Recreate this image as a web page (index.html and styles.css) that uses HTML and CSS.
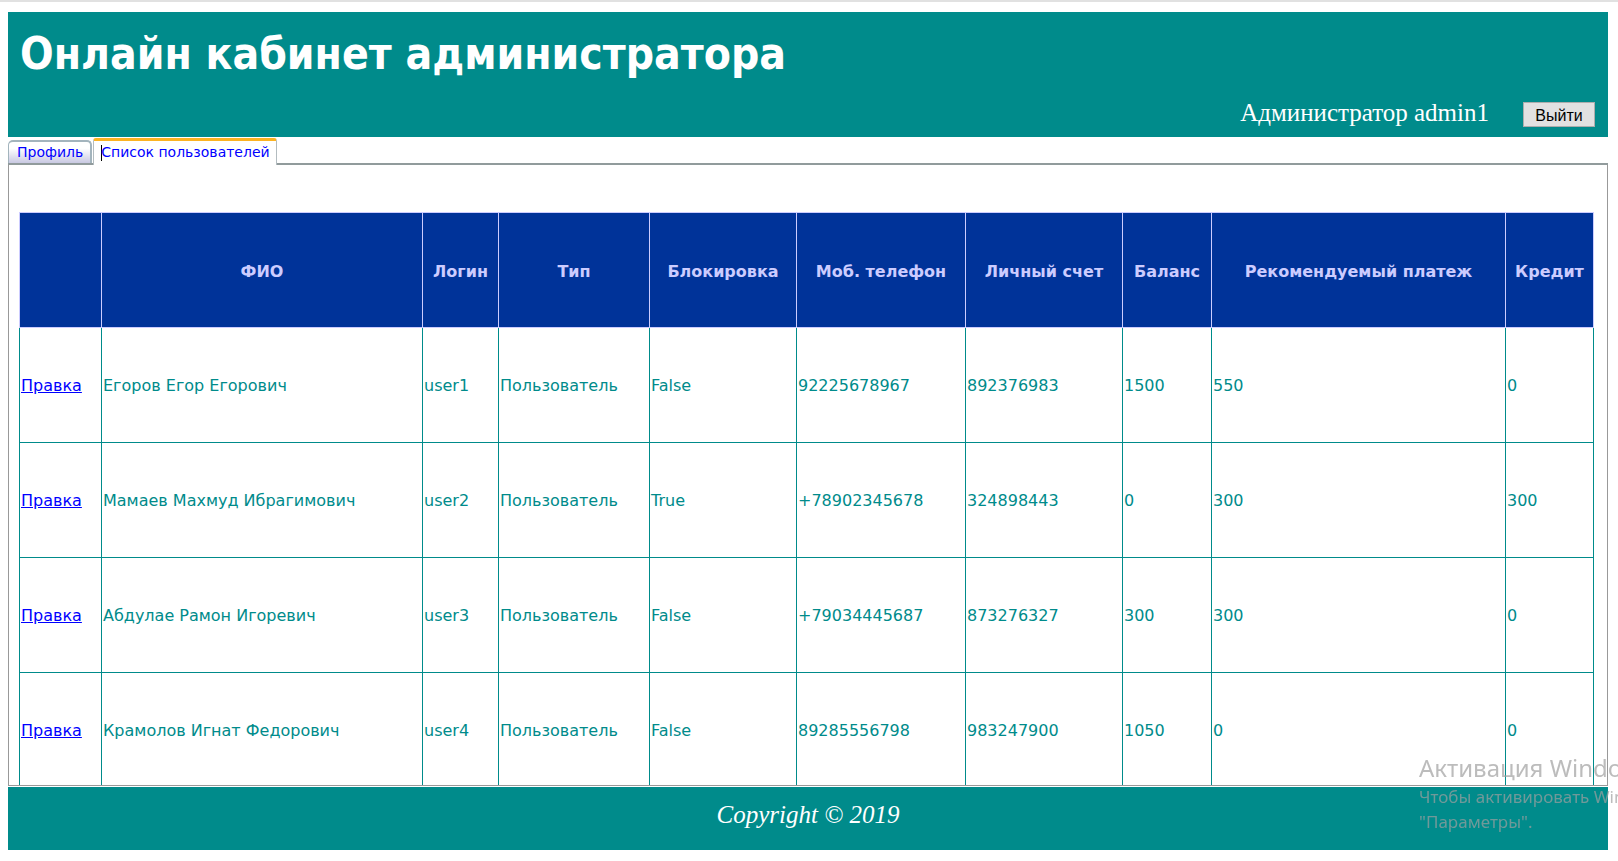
FILE: index.html
```html
<!DOCTYPE html>
<html lang="ru">
<head>
<meta charset="utf-8">
<title>Онлайн кабинет администратора</title>
<link rel="stylesheet" href="styles.css">
</head>
<body class="page">
<header class="banner">
  <h1 class="banner-title">Онлайн кабинет администратора</h1>
  <div class="account">
    <span class="account-name">Администратор admin1</span>
    <button class="logout" type="button">Выйти</button>
  </div>
</header>
<nav class="tabs">
  <a class="tab" href="#profile">Профиль</a>
  <a class="tab tab-active" href="#users"><span class="caret"></span>Список пользователей</a>
</nav>
<main class="panel" id="users">
  <table class="users">
    <colgroup>
      <col class="c-edit"><col class="c-name"><col class="c-login"><col class="c-type"><col class="c-lock">
      <col class="c-phone"><col class="c-bill"><col class="c-balance"><col class="c-payment"><col class="c-credit">
    </colgroup>
    <thead>
      <tr><th></th><th>ФИО</th><th>Логин</th><th>Тип</th><th>Блокировка</th><th>Моб. телефон</th><th>Личный счет</th><th>Баланс</th><th>Рекомендуемый платеж</th><th>Кредит</th></tr>
    </thead>
    <tbody>
      <tr><td><a href="#user1">Правка</a></td><td>Егоров Егор Егорович</td><td>user1</td><td>Пользователь</td><td>False</td><td>92225678967</td><td>892376983</td><td>1500</td><td>550</td><td>0</td></tr>
      <tr><td><a href="#user2">Правка</a></td><td>Мамаев Махмуд Ибрагимович</td><td>user2</td><td>Пользователь</td><td>True</td><td>+78902345678</td><td>324898443</td><td>0</td><td>300</td><td>300</td></tr>
      <tr><td><a href="#user3">Правка</a></td><td>Абдулае Рамон Игоревич</td><td>user3</td><td>Пользователь</td><td>False</td><td>+79034445687</td><td>873276327</td><td>300</td><td>300</td><td>0</td></tr>
      <tr><td><a href="#user4">Правка</a></td><td>Крамолов Игнат Федорович</td><td>user4</td><td>Пользователь</td><td>False</td><td>89285556798</td><td>983247900</td><td>1050</td><td>0</td><td>0</td></tr>
    </tbody>
  </table>
</main>
<footer class="footer">Copyright © 2019</footer>
<aside class="watermark">
  <div class="watermark-title">Активация Windows</div>
  <div class="watermark-text">Чтобы активировать Windows<br>"Параметры".</div>
</aside>
</body>
</html>
```
FILE: styles.css
```css
* { box-sizing: border-box; }

.page {
  display: flex;
  flex-direction: column;
  height: 100vh;
  margin: 0;
  padding: 10px 10px 11px 8px;
  border-top: 2px solid #e1e1e1;
  background: #fff;
  overflow: hidden;
  font-family: "DejaVu Sans", Verdana, sans-serif;
}

.banner {
  display: flex;
  flex-direction: column;
  justify-content: space-between;
  flex: none;
  height: 125px;
  padding: 12px 13px 10px 12px;
  background: #008b8b;
  color: #fff;
}

.banner-title {
  margin: 0;
  font: bold 44px/60px "DejaVu Sans Condensed", Tahoma, sans-serif;
}

.account {
  display: flex;
  justify-content: flex-end;
  align-items: flex-end;
  gap: 34px;
}

.account-name {
  font: 25px/28px "Liberation Serif", "Times New Roman", serif;
}

.logout {
  width: 72px;
  height: 25px;
  padding: 2px 0 0;
  border: 1px solid #adadad;
  background: #e1e1e1;
  color: #000;
  font: 16px/20px "Liberation Sans", Arial, sans-serif;
}

.tabs {
  display: flex;
  align-items: flex-end;
  flex: none;
  height: 28px;
  gap: 1px;
  border-bottom: 2px solid #919b9c;
}

.tab {
  height: 23px;
  padding: 0 7px 0 8px;
  border: 1px solid #a3b4bd;
  border-top-width: 2px;
  border-right-width: 2px;
  border-bottom: 0;
  border-radius: 5px 5px 0 0;
  background: linear-gradient(#fff 30%, #c9c9e2);
  color: #00f;
  font-size: 14px;
  line-height: 20px;
  text-decoration: none;
}

.tab-active {
  height: 27px;
  margin-bottom: -2px;
  padding: 0 6px 0 7px;
  border: 1px solid #b3bcc0;
  border-top: 3px solid #fcb322;
  border-bottom: 0;
  border-radius: 3px 3px 0 0;
  background: #fff;
  line-height: 22px;
}

.caret {
  display: inline-block;
  width: 1px;
  height: 16px;
  margin-right: -1px;
  background: #000;
  vertical-align: middle;
}

.panel {
  flex: 1;
  min-height: 0;
  padding: 47px 13px 0 10px;
  border: 1px solid #999;
  border-top: 0;
  overflow: hidden;
}

.users {
  width: 100%;
  border-collapse: collapse;
  table-layout: fixed;
  color: #008b8b;
  font-size: 16px;
}

.users th,
.users td {
  height: 115px;
  padding: 1px;
  border: 1px solid #008b8b;
  text-align: left;
  white-space: nowrap;
}

.users th {
  padding-top: 3px;
  border-color: #ccccff;
  background: #003399;
  color: #ccccff;
  text-align: center;
}

.users a { color: #00f; }

.c-edit { width: 82px; }
.c-name { width: 321px; }
.c-login { width: 76px; }
.c-type { width: 151px; }
.c-lock { width: 147px; }
.c-phone { width: 169px; }
.c-bill { width: 157px; }
.c-balance { width: 89px; }
.c-payment { width: 294px; }
.c-credit { width: 88px; }

.footer {
  flex: none;
  height: 63px;
  margin-top: 1px;
  padding-top: 14px;
  background: #008b8b;
  color: #fff;
  font: italic 25px/28px "Liberation Serif", "Times New Roman", serif;
  text-align: center;
}

.watermark {
  position: fixed;
  top: 752px;
  right: 0;
  width: 199px;
  overflow: hidden;
  color: rgba(160, 160, 160, 0.7);
  font-family: "Noto Sans", "Segoe UI", sans-serif;
  white-space: nowrap;
  pointer-events: none;
}

.watermark-title { font-size: 24px; line-height: 32px; }
.watermark-text { font-size: 17px; line-height: 25px; }
```
